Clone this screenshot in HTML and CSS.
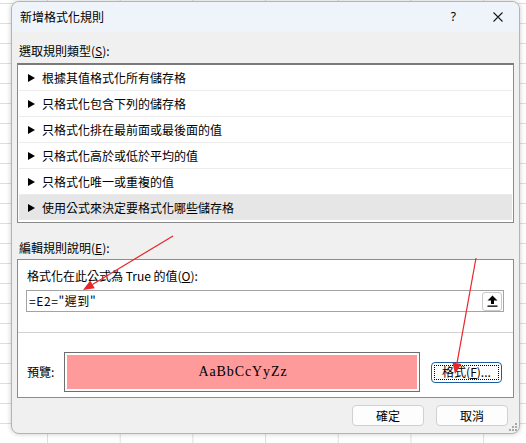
FILE: index.html
```html
<!DOCTYPE html>
<html lang="zh-Hant">
<head>
<meta charset="utf-8">
<link rel="stylesheet" href="styles.css">
</head>
<body>
<div class="dialog">
  <div class="titlebar">
    <span class="title">新增格式化規則</span>
    <span class="tb-btns">
      <span class="help">?</span>
      <svg class="close" width="10" height="10" viewBox="0 0 10 10"><path d="M0.5 0.5 L9.5 9.5 M9.5 0.5 L0.5 9.5" stroke="#1a1a1a" stroke-width="1.1" fill="none"/></svg>
    </span>
  </div>
  <div class="content">
    <div class="label l1">選取規則類型(<u>S</u>):</div>
    <ul class="list">
      <li><svg class="tri" width="8" height="9" viewBox="0 0 8 9"><path d="M0 0 L8 4.5 L0 9 Z" fill="#000"/></svg>根據其值格式化所有儲存格</li>
      <li><svg class="tri" width="8" height="9" viewBox="0 0 8 9"><path d="M0 0 L8 4.5 L0 9 Z" fill="#000"/></svg>只格式化包含下列的儲存格</li>
      <li><svg class="tri" width="8" height="9" viewBox="0 0 8 9"><path d="M0 0 L8 4.5 L0 9 Z" fill="#000"/></svg>只格式化排在最前面或最後面的值</li>
      <li><svg class="tri" width="8" height="9" viewBox="0 0 8 9"><path d="M0 0 L8 4.5 L0 9 Z" fill="#000"/></svg>只格式化高於或低於平均的值</li>
      <li><svg class="tri" width="8" height="9" viewBox="0 0 8 9"><path d="M0 0 L8 4.5 L0 9 Z" fill="#000"/></svg>只格式化唯一或重複的值</li>
      <li class="sel"><svg class="tri" width="8" height="9" viewBox="0 0 8 9"><path d="M0 0 L8 4.5 L0 9 Z" fill="#000"/></svg>使用公式來決定要格式化哪些儲存格</li>
    </ul>
    <div class="label l2">編輯規則說明(<u>E</u>):</div>
    <div class="panel">
      <div class="label l3">格式化在此公式為 True 的值(<u>O</u>):</div>
      <div class="input">
        <span class="formula">=E2="遲到"</span>
        <span class="collapse">
          <svg width="11" height="12" viewBox="0 0 11 12"><path d="M5.5 0.5 L10.5 5.5 L7 5.5 L7 9 L4 9 L4 5.5 L0.5 5.5 Z" fill="#000"/><rect x="0.5" y="10.5" width="10" height="1.3" fill="#000"/></svg>
        </span>
      </div>
      <div class="sep"></div>
      <div class="preview-row">
        <span class="plabel">預覽:</span>
        <div class="preview"><div class="pink">AaBbCcYyZz</div></div>
        <div class="fmt-btn"><span class="focus">格式(<u>F</u>)...</span></div>
      </div>
    </div>
    <div class="buttons">
      <span class="btn">確定</span>
      <span class="btn">取消</span>
    </div>
  </div>
  <svg class="grip" width="8" height="8" viewBox="0 0 8 8" fill="#a8a8a8">
    <rect x="6" y="0" width="2" height="2"/>
    <rect x="3" y="3" width="2" height="2"/><rect x="6" y="3" width="2" height="2"/>
    <rect x="0" y="6" width="2" height="2"/><rect x="3" y="6" width="2" height="2"/><rect x="6" y="6" width="2" height="2"/>
  </svg>
</div>
<svg class="annot" width="526" height="443" viewBox="0 0 526 443">
  <line x1="173" y1="236" x2="92.5" y2="284.4" stroke="#e8262a" stroke-width="1.2"/>
  <polygon points="83,290 94.8,288.3 90.2,280.5" fill="#e8262a"/>
  <line x1="476" y1="258" x2="457" y2="363.2" stroke="#e8262a" stroke-width="1.2"/>
  <polygon points="455,374 461.4,364 452.5,362.4" fill="#e8262a"/>
</svg>
</body>
</html>
```
FILE: styles.css
```css
html, body {
  margin: 0;
  padding: 0;
}
body {
  width: 526px;
  height: 443px;
  overflow: hidden;
  position: relative;
  background-color: #ffffff;
  background-image:
    linear-gradient(to right, #dedede 1px, transparent 1px),
    linear-gradient(to bottom, #dedede 1px, transparent 1px);
  background-size: 72.7px 20px, 72.7px 20px;
  background-position: 47px 0, 0 3px;
  font-family: "Noto Sans CJK TC", "Noto Sans", sans-serif;
  font-size: 12px;
  color: #000;
}
.dialog {
  position: relative;
  margin: 1px 0 0 11px;
  width: 507px;
  height: 431px;
  border: 1px solid #b4b4b4;
  border-radius: 8px;
  background: #f0f0f0;
  box-shadow: 0 0 5px rgba(0, 0, 0, 0.22);
  overflow: hidden;
}
.titlebar {
  height: 30px;
  background: #eff3fa;
  display: flex;
  align-items: center;
  justify-content: space-between;
  padding: 0 16px 0 8px;
}
.title {
  font-size: 12px;
  line-height: 16px;
}
.tb-btns {
  display: flex;
  align-items: center;
  gap: 37px;
}
.help {
  font-family: "Noto Sans", sans-serif;
  font-size: 12px;
  line-height: 14px;
}
.close {
  display: block;
}
.content {
  padding: 0 5px;
}
.label {
  line-height: 16px;
  height: 16px;
  white-space: nowrap;
}
.label u, .fmt-btn u {
  text-underline-offset: 1px;
}
.l1 {
  margin: 11px 0 4px 2px;
}
.list {
  list-style: none;
  margin: 0;
  padding: 0 1px 2px 1px;
  background: #fff;
  border: 1px solid #8a8a8a;
  border-top: 2px solid #7a7a7a;
  height: 155px;
}
.list li {
  height: 25px;
  line-height: 25px;
  border-bottom: 1px solid #ececec;
  padding-left: 9px;
  display: flex;
  align-items: center;
  white-space: nowrap;
}
.list li:last-child {
  border-bottom: none;
}
.list li.sel {
  background: #e6e6e6;
}
.tri {
  width: 7px;
  height: 8px;
  margin-right: 7px;
  flex: none;
}
.l2 {
  margin: 17px 0 3px 2px;
}
.panel {
  background: #fff;
  border: 1px solid #8c8c8c;
  padding-top: 8px;
  box-sizing: border-box;
  height: 139px;
}
.l3 {
  margin: 0 0 6px 9px;
}
.input {
  margin: 0 9px 0 8px;
  height: 22px;
  box-sizing: border-box;
  border: 1px solid #a3a3a3;
  display: flex;
  align-items: center;
  justify-content: space-between;
  padding: 0 1px 0 2px;
}
.formula {
  line-height: 16px;
  letter-spacing: 0.6px;
}
.collapse {
  width: 20px;
  height: 19px;
  box-sizing: border-box;
  border: 1px solid #c9c9c9;
  border-radius: 3px;
  background: #fdfdfd;
  display: flex;
  align-items: center;
  justify-content: center;
}
.collapse svg {
  display: block;
}
.sep {
  height: 1px;
  background: #d2d2d2;
  margin-top: 20px;
}
.preview-row {
  display: flex;
  align-items: center;
  padding: 19px 0 0 9px;
}
.plabel {
  width: 37px;
  line-height: 16px;
}
.preview {
  width: 356px;
  height: 40px;
  box-sizing: border-box;
  border: 1px solid #6e6e6e;
  padding: 2px;
  background: #fff;
}
.pink {
  height: 100%;
  background: #ff9a9a;
  display: flex;
  align-items: center;
  justify-content: center;
  font-family: "Liberation Serif", "Times New Roman", serif;
  font-size: 14px;
  letter-spacing: 0.9px;
  padding-left: 2px;
  box-sizing: border-box;
}
.fmt-btn {
  margin-left: 11px;
  width: 71px;
  height: 21px;
  box-sizing: border-box;
  border: 1px solid #1d5f9e;
  border-radius: 4px;
  background: #fdfdfd;
  padding: 2px;
  display: flex;
}
.focus {
  flex: 1;
  border: 1px dotted #000;
  display: flex;
  align-items: center;
  justify-content: center;
  line-height: 14px;
  font-size: 12px;
}
.buttons {
  display: flex;
  justify-content: flex-end;
  gap: 12px;
  margin-top: 7px;
  padding-right: 6px;
}
.btn {
  width: 72px;
  height: 21px;
  box-sizing: border-box;
  border: 1px solid #d0d0d0;
  border-radius: 4px;
  background: #fdfdfd;
  display: flex;
  align-items: center;
  justify-content: center;
  line-height: 16px;
}
.grip {
  position: absolute;
  right: 2px;
  bottom: 2px;
}
.annot {
  position: absolute;
  left: 0;
  top: 0;
  pointer-events: none;
}
```
